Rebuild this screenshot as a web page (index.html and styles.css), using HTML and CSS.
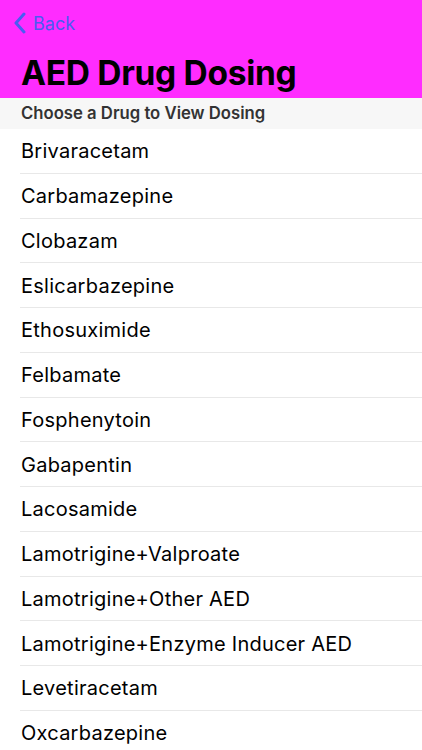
FILE: index.html
```html
<!DOCTYPE html>
<html>
<head>
<meta charset="utf-8">
<link rel="stylesheet" href="styles.css">
</head>
<body>
<div class="header">
  <div class="nav">
    <svg class="chev" width="12" height="22" viewBox="0 0 12 22"><path d="M10 2 L2 11 L10 20" fill="none" stroke="#4a5cf2" stroke-width="3" stroke-linecap="round" stroke-linejoin="round"/></svg>
    <span class="back">Back</span>
  </div>
  <h1 class="title">AED Drug Dosing</h1>
</div>
<div class="section">Choose a Drug to View Dosing</div>
<ul class="list">
  <li class="row">Brivaracetam</li>
  <li class="row">Carbamazepine</li>
  <li class="row">Clobazam</li>
  <li class="row">Eslicarbazepine</li>
  <li class="row">Ethosuximide</li>
  <li class="row">Felbamate</li>
  <li class="row">Fosphenytoin</li>
  <li class="row">Gabapentin</li>
  <li class="row">Lacosamide</li>
  <li class="row">Lamotrigine+Valproate</li>
  <li class="row">Lamotrigine+Other AED</li>
  <li class="row">Lamotrigine+Enzyme Inducer AED</li>
  <li class="row">Levetiracetam</li>
  <li class="row">Oxcarbazepine</li>
</ul>
</body>
</html>
```
FILE: styles.css
```css
html, body { margin: 0; padding: 0; }
body { font-family: Inter, "Noto Sans", sans-serif; background: #fff; width: 422px; height: 750px; overflow: hidden; color: #000; }
.header { background: #ff2cff; height: 98px; box-sizing: border-box; padding: 12px 0 0 0; }
.nav { display: flex; align-items: center; height: 22px; padding-left: 14px; gap: 7px; }
.back { color: #4a5cf2; font-size: 18px; }
.title { margin: 19px 0 0 21px; font-size: 33.5px; font-weight: 700; line-height: 40px; letter-spacing: -0.3px; }
.section { background: #f7f7f7; height: 31px; line-height: 31px; padding-left: 21px; font-size: 16.7px; font-weight: 600; color: #333; }
.list { list-style: none; margin: 0; padding: 0 0 0 20px; }
.row { height: 44.75px; box-sizing: border-box; border-bottom: 1px solid #e8e8e8; display: flex; align-items: center; padding-left: 1px; padding-top: 1px; font-size: 20px; letter-spacing: 0.25px; }
```
